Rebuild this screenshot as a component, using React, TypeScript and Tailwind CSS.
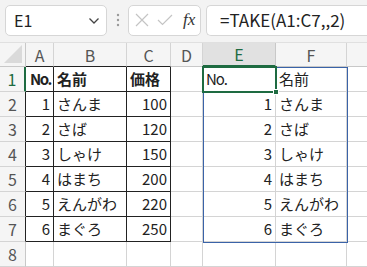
import React from "react";

const font = { fontFamily: '"Noto Sans CJK JP", "Noto Sans", sans-serif' };

const cols = ["A", "B", "C", "D", "E", "F", "G"];
const data: [string, string, string][] = [
  ["1", "さんま", "100"],
  ["2", "さば", "120"],
  ["3", "しゃけ", "150"],
  ["4", "はまち", "200"],
  ["5", "えんがわ", "220"],
  ["6", "まぐろ", "250"],
];

function Cell({
  children,
  className = "",
}: {
  children?: React.ReactNode;
  className?: string;
}) {
  return (
    <div
      className={
        "h-[25px] border-b border-r flex items-center overflow-hidden whitespace-nowrap text-[15px] text-[#222] " +
        className
      }
    >
      {children}
    </div>
  );
}

export default function App() {
  const rows: React.ReactNode[] = [];
  const headerRow = (
    <React.Fragment key="h">
      <div className="h-[24px] border-b border-r border-[#c8c8c8] bg-[#f5f5f5] relative">
        <svg className="absolute right-[3px] bottom-[3px]" width="18" height="18" viewBox="0 0 18 18">
          <polygon points="18,0 18,18 0,18" fill="#dadada" />
        </svg>
      </div>
      {cols.map((c) => (
        <div
          key={c}
          className={
            "h-[24px] flex items-center justify-center text-[16px] " +
            (c === "E"
              ? "bg-[#e1e1e1] text-[#1e6b41] border-b-2 border-b-[#1e6b41] border-r border-r-[#c8c8c8]"
              : "bg-[#f5f5f5] text-[#555] border-r border-[#d4d4d4] " +
                (c === "A" || c === "B" || c === "C" ? "border-b border-b-[#222]" : "border-b border-b-[#c8c8c8]"))
          }
        >
          {c === "G" ? "" : c}
        </div>
      ))}
    </React.Fragment>
  );
  rows.push(headerRow);

  for (let r = 1; r <= 8; r++) {
    const inTable = r <= 7;
    const tb = inTable ? "border-[#222]" : "border-[#d4d4d4]";
    const d = r >= 2 && r <= 7 ? data[r - 2] : null;
    rows.push(
      <React.Fragment key={r}>
        <div
          className={
            "h-[25px] flex items-center justify-center text-[16px] bg-[#f5f5f5] border-b border-b-[#d4d4d4] " +
            (r === 1
              ? "text-[#1e6b41] border-r-2 border-r-[#1e6b41]"
              : "text-[#555] border-r " + (inTable ? "border-r-[#222]" : "border-r-[#c8c8c8]"))
          }
        >
          {r}
        </div>
        <Cell className={tb + (r === 1 ? " pl-[4px] font-bold tracking-[-1.5px]" : " justify-end pr-[3px]")}>
          {r === 1 ? "No." : d ? d[0] : ""}
        </Cell>
        <Cell className={tb + " pl-[3px]" + (r === 1 ? " font-bold" : "")}>
          {r === 1 ? "名前" : d ? d[1] : ""}
        </Cell>
        <Cell className={tb + (r === 1 ? " pl-[3px] font-bold" : " justify-end pr-[3px]")}>
          {r === 1 ? "価格" : d ? d[2] : ""}
        </Cell>
        <Cell className="border-[#d4d4d4]" />
        <Cell className={"border-[#d4d4d4]" + (r === 1 ? " pl-[3px] text-[14px] tracking-[-1px]" : " justify-end pr-[3px]")}>
          {r === 1 ? "No." : d ? d[0] : ""}
        </Cell>
        <Cell className="border-[#d4d4d4] pl-[3px]">{r === 1 ? "名前" : d ? d[1] : ""}</Cell>
        <Cell className="border-[#d4d4d4]" />
      </React.Fragment>
    );
  }

  return (
    <div className="w-[367px] h-[267px] overflow-hidden bg-white" style={font}>
      <div className="h-[43px] bg-[#f3f3f3] flex items-center pl-[5px] pb-[2px] border-b border-[#e0e0e0]">
        <div className="w-[102px] h-[31px] bg-white border border-[#d6d6d6] rounded-[5px] flex items-center justify-between pl-[8px] pr-[6px] shrink-0">
          <span className="text-[16px] text-[#222]">E1</span>
          <svg width="12" height="8" viewBox="0 0 12 8" className="mt-[1px]">
            <path d="M1.5 1.5 L6 6 L10.5 1.5" fill="none" stroke="#444" strokeWidth="1.3" />
          </svg>
        </div>
        <div className="w-[21px] flex justify-center shrink-0">
          <svg width="4" height="14" viewBox="0 0 4 14">
            <circle cx="2" cy="2" r="1.2" fill="#999" />
            <circle cx="2" cy="7" r="1.2" fill="#999" />
            <circle cx="2" cy="12" r="1.2" fill="#999" />
          </svg>
        </div>
        <div className="w-[73px] h-[31px] bg-white border border-[#d6d6d6] rounded-[5px] flex items-center pl-[6px] gap-[8px] shrink-0">
          <svg width="14" height="14" viewBox="0 0 14 14">
            <path d="M1 1 L13 13 M13 1 L1 13" stroke="#c4c4c4" strokeWidth="1.2" />
          </svg>
          <svg width="16" height="12" viewBox="0 0 16 12">
            <path d="M1 6 L5.5 10.5 L15 1" fill="none" stroke="#c4c4c4" strokeWidth="1.2" />
          </svg>
          <span
            className="text-[17px] italic text-[#333] ml-[2px]"
            style={{ fontFamily: '"Liberation Serif", "DejaVu Serif", serif' }}
          >
            fx
          </span>
        </div>
        <div className="ml-[5px] flex-1 h-[31px] bg-white border border-[#d6d6d6] rounded-l-[5px] border-r-0 flex items-center pl-[13px]">
          <span className="text-[17px] text-[#222]">=TAKE(A1:C7,,2)</span>
        </div>
      </div>
      <div className="relative">
        <div className="grid grid-cols-[26px_28px_73px_44px_32px_73px_71px_40px]">{rows}</div>
        <div className="absolute left-[203px] top-[24px] w-[145px] h-[176px] border border-[#3a63a8] pointer-events-none" />
        <div className="absolute left-[202px] top-[23px] w-[75px] h-[27px] border-2 border-[#1e6b41] pointer-events-none" />
        <div className="absolute left-[273px] top-[46px] w-[6px] h-[6px] bg-[#1e6b41] border border-white pointer-events-none" />
      </div>
    </div>
  );
}
